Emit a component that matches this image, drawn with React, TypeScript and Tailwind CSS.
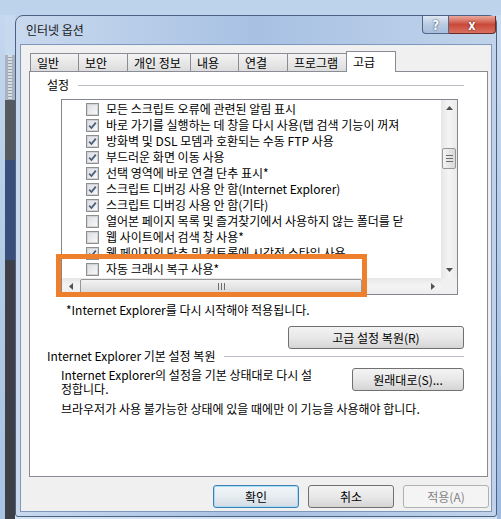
import React from "react";

const rows: [boolean, string][] = [
  [false, "모든 스크립트 오류에 관련된 알림 표시"],
  [true, "바로 가기를 실행하는 데 창을 다시 사용(탭 검색 기능이 꺼져"],
  [true, "방화벽 및 DSL 모뎀과 호환되는 수동 FTP 사용"],
  [true, "부드러운 화면 이동 사용"],
  [true, "선택 영역에 바로 연결 단추 표시*"],
  [true, "스크립트 디버깅 사용 안 함(Internet Explorer)"],
  [true, "스크립트 디버깅 사용 안 함(기타)"],
  [false, "열어본 페이지 목록 및 즐겨찾기에서 사용하지 않는 폴더를 닫"],
  [false, "웹 사이트에서 검색 창 사용*"],
  [true, "웹 페이지의 단추 및 컨트롤에 시각적 스타일 사용"],
  [false, "자동 크래시 복구 사용*"],
];

const tabs = [
  { label: "일반", w: "w-[48px]" },
  { label: "보안", w: "w-[49px]" },
  { label: "개인 정보", w: "w-[63px]" },
  { label: "내용", w: "w-[48px]" },
  { label: "연결", w: "w-[49px]" },
  { label: "프로그램", w: "w-[59px]" },
];

function Check({ on }: { on: boolean }) {
  return (
    <span className="flex h-[13px] w-[13px] shrink-0 items-center justify-center border border-[#8e8f8f] bg-white">
      <span className="flex h-[11px] w-[11px] items-center justify-center border border-[#d0d4d9] bg-gradient-to-br from-[#dcdfe2] to-[#f7f7f7]">
        {on && (
          <svg width="9" height="9" viewBox="0 0 9 9">
            <path d="M1.2 4.6 L3.5 7 L7.8 1.6" fill="none" stroke="#4a5d7c" strokeWidth="1.8" />
          </svg>
        )}
      </span>
    </span>
  );
}

function Btn({ children, kind = "normal", w }: { children: React.ReactNode; kind?: "normal" | "default" | "disabled"; w: string }) {
  const look =
    kind === "default"
      ? "border-[#3c7fb1] bg-gradient-to-b from-[#f1f5f8] via-[#e6ecf0] to-[#d3dde4] shadow-[inset_0_0_0_1px_#a6dcf5] text-black"
      : kind === "disabled"
      ? "border-[#adb2b5] bg-[#f4f4f4] text-[#838383]"
      : "border-[#707070] bg-gradient-to-b from-[#f3f3f3] via-[#e8e8e8] to-[#d5d5d5] text-black";
  return (
    <div className={`flex h-[23px] ${w} shrink-0 items-center justify-center rounded-[3px] border ${look}`}>
      {children}
    </div>
  );
}

function Tri({ dir }: { dir: "up" | "down" | "left" | "right" }) {
  const d = {
    up: "M0 4 L3.5 0 L7 4 Z",
    down: "M0 0 L7 0 L3.5 4 Z",
    left: "M4 0 L4 7 L0 3.5 Z",
    right: "M0 0 L4 3.5 L0 7 Z",
  }[dir];
  const horiz = dir === "left" || dir === "right";
  return (
    <svg width={horiz ? 4 : 7} height={horiz ? 7 : 4} viewBox={horiz ? "0 0 4 7" : "0 0 7 4"}>
      <path d={d} fill="#505050" />
    </svg>
  );
}

function Header({ text }: { text: string }) {
  return (
    <div className="flex h-[14px] items-center pl-[17px] pr-[23px]">
      <span className="leading-[14px]">{text}</span>
      <div className="ml-[9px] h-px flex-1 bg-[#b9bfc5]" />
    </div>
  );
}

export default function App() {
  return (
    <div className="flex h-[519px] w-[501px] flex-col overflow-hidden bg-gradient-to-b from-[#bdd3ec] to-[#d4e3f3] text-[12px] text-black font-['Noto_Sans_CJK_KR','Noto_Sans',sans-serif]">
      <div className="h-[15px] shrink-0" />
      <div className="flex flex-1">
        {/* background behind window */}
        <div className="flex w-[15px] shrink-0">
          <div className="w-[5px] bg-gradient-to-b from-[#c3d7ee] via-[#b4cbe6] to-[#a9c3e4]" />
          <div className="flex w-[10px] flex-col">
            <div className="h-[40px] bg-[#c6d9ee]" />
            <div className="h-[45px] border-x-[3px] border-[#aab4c0] bg-[repeating-linear-gradient(180deg,#d8dde3_0px,#d8dde3_2px,#9aa4b0_2px,#9aa4b0_3px)]" />
            <div className="h-[60px] bg-[#56595e]" />
            <div className="h-[100px] bg-[#3a4e7c]" />
            <div className="flex-1 bg-[#3d4046]" />
          </div>
        </div>

        {/* window */}
        <div className="flex h-[502px] w-[482px] shrink-0 flex-col rounded-t-[8px] rounded-b-[3px] border border-[#4d6283] bg-gradient-to-r from-[#c8d9ee] via-[#a8c1e3] to-[#c0d3ea] px-[4px] pb-[4px]">
          {/* title bar */}
          <div className="flex h-[28px] shrink-0 items-start">
            <span className="ml-[6px] mt-[7px] leading-[14px] text-[#1a1a1a]">인터넷 옵션</span>
            <div className="ml-auto -mr-[4px] flex h-[18px]">
              <div className="flex w-[27px] items-center justify-center rounded-bl-[4px] border border-t-0 border-[#50678a] bg-gradient-to-b from-[#dfe8f3] via-[#b9cbe2] to-[#a7bedc] text-[13px] font-bold text-white [text-shadow:0_0_2px_#1f2f4a]">
                ?
              </div>
              <div className="flex w-[47px] items-center justify-center rounded-br-[4px] border border-l-0 border-t-0 border-[#6b2a24] bg-gradient-to-b from-[#e9a79c] via-[#c9493a] to-[#d9705f] text-[13px] font-bold text-white [text-shadow:0_0_2px_#4a120c]">
                x
              </div>
            </div>
          </div>

          {/* client */}
          <div className="flex flex-1 flex-col border border-[#7f97b9] bg-[#f0f0f0] pt-[6px]">
            {/* tabs */}
            <div className="ml-[9px] flex h-[20px] items-end">
              {tabs.map((t) => (
                <div
                  key={t.label}
                  className={`flex h-[18px] ${t.w} items-center border-l border-t border-[#898c95] bg-gradient-to-b from-[#f4f4f4] to-[#dcdcdc] pl-[6px] leading-[14px]`}
                >
                  {t.label}
                </div>
              ))}
              <div className="relative z-10 -mb-px flex h-[21px] w-[50px] items-center border-x border-t border-[#898c95] bg-white pl-[6px] leading-[14px]">
                고급
              </div>
            </div>

            {/* panel */}
            <div className="ml-[8px] flex h-[406px] w-[459px] flex-col border border-[#898c95] bg-white">
              <div className="mt-[6px]">
                <Header text="설정" />
              </div>

              {/* list box */}
              <div className="relative ml-[31px] mt-[7px] h-[196px] w-[397px] border border-[#828790]">
                <div className="grid h-full grid-cols-[379px_16px] grid-rows-[178px_16px]">
                  <div className="overflow-hidden pt-px">
                    {rows.map(([on, text], i) => (
                      <div key={i} className="flex h-[16px] items-center pl-[24px]">
                        <Check on={on} />
                        <span className="ml-[7px] whitespace-nowrap leading-[16px]">{text}</span>
                      </div>
                    ))}
                  </div>
                  {/* vertical scrollbar */}
                  <div className="flex flex-col bg-gradient-to-r from-[#e6e6e6] via-[#f4f4f4] to-[#eaeaea]">
                    <div className="flex h-[16px] items-center justify-center">
                      <Tri dir="up" />
                    </div>
                    <div className="mx-px mt-[32px] flex h-[21px] flex-col items-center justify-center gap-[2px] rounded-[2px] border border-[#979797] bg-gradient-to-r from-[#f3f3f3] to-[#d9d9d9]">
                      <div className="h-px w-[7px] bg-[#6d6d6d]" />
                      <div className="h-px w-[7px] bg-[#6d6d6d]" />
                      <div className="h-px w-[7px] bg-[#6d6d6d]" />
                    </div>
                    <div className="mt-auto flex h-[16px] items-center justify-center">
                      <Tri dir="down" />
                    </div>
                  </div>
                  {/* horizontal scrollbar */}
                  <div className="flex items-center bg-gradient-to-b from-[#e7e7e7] via-[#f4f4f4] to-[#ececec]">
                    <div className="flex h-full w-[17px] items-center justify-center">
                      <Tri dir="left" />
                    </div>
                    <div className="ml-px flex h-[15px] w-[282px] items-center justify-center gap-[2px] rounded-[2px] border border-[#979797] bg-gradient-to-b from-[#f3f3f3] to-[#d9d9d9]">
                      <div className="h-[7px] w-px bg-[#6d6d6d]" />
                      <div className="h-[7px] w-px bg-[#6d6d6d]" />
                      <div className="h-[7px] w-px bg-[#6d6d6d]" />
                    </div>
                    <div className="ml-auto flex h-full w-[17px] items-center justify-center">
                      <Tri dir="right" />
                    </div>
                  </div>
                  <div className="bg-[#f0f0f0]" />
                </div>

                {/* orange highlight */}
                <div className="absolute left-[-6px] top-[154px] h-[43px] w-[311px] border-[5px] border-[#ee7f2d]" />
              </div>

              <div className="ml-[36px] mt-[8px] leading-[14px]">*Internet Explorer를 다시 시작해야 적용됩니다.</div>

              <div className="mr-[23px] mt-[9px] flex justify-end">
                <Btn w="w-[176px]">고급 설정 복원(R)</Btn>
              </div>

              <div className="mt-0">
                <Header text="Internet Explorer 기본 설정 복원" />
              </div>

              <div className="ml-[31px] mr-[23px] mt-[5px] flex items-start justify-between">
                <div className="leading-[14px]">
                  <div>Internet Explorer의 설정을 기본 상태대로 다시 설</div>
                  <div>정합니다.</div>
                </div>
                <Btn w="w-[112px]">원래대로(S)...</Btn>
              </div>

              <div className="ml-[31px] mt-[6px] leading-[14px]">
                브라우저가 사용 불가능한 상태에 있을 때에만 이 기능을 사용해야 합니다.
              </div>
            </div>

            {/* dialog buttons */}
            <div className="mt-[8px] flex justify-end gap-[9px] pr-[2px]">
              <Btn w="w-[86px]" kind="default">확인</Btn>
              <Btn w="w-[86px]">취소</Btn>
              <Btn w="w-[86px]" kind="disabled">적용(A)</Btn>
            </div>
          </div>
        </div>

        <div className="flex-1 bg-gradient-to-b from-[#c9dbef] to-[#9fbbe0]" />
      </div>
    </div>
  );
}
